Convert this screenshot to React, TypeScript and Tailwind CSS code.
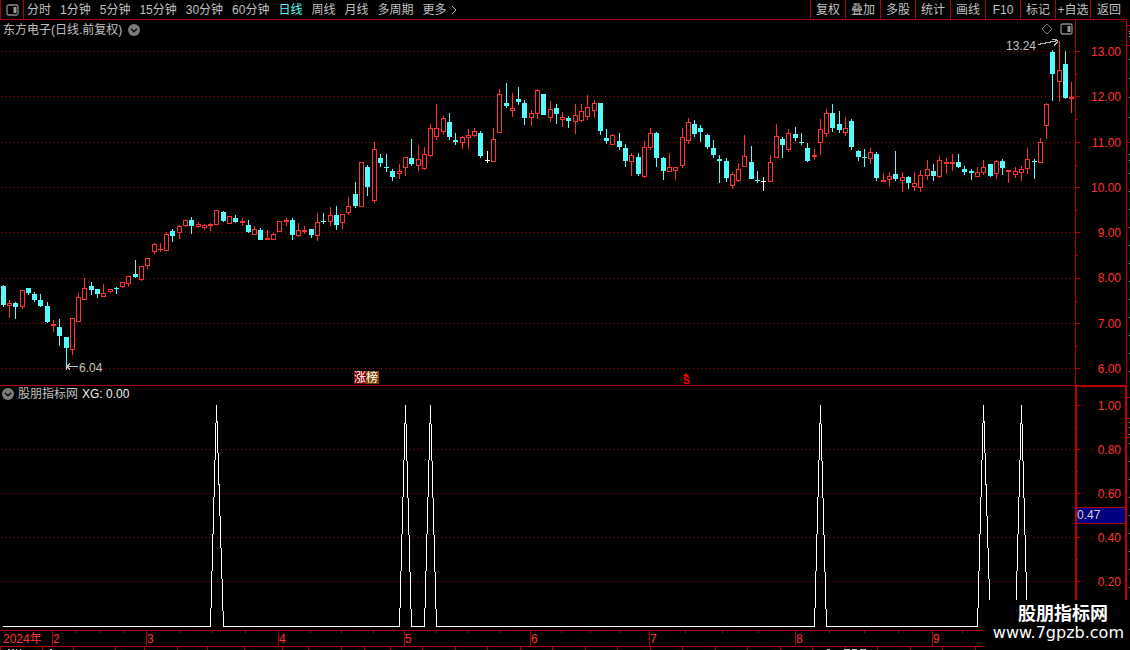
import { ReactNode } from "react";

type Kind = "up" | "down" | "flat";
// high, body top, body bottom, low
type Candle = [number, number, number, number, Kind];

const U = "up";
const D = "down";
const F = "flat";

const candles: Candle[] = [
  [285, 286, 305, 307, D], [300, 303, 306, 318, U], [302, 303, 307, 319, D], [290, 290, 307, 309, U],
  [288, 288, 293, 295, D], [292, 294, 300, 302, D], [294, 300, 306, 307, D], [302, 306, 322, 323, D],
  [320, 324, 326, 332, U], [319, 327, 336, 346, D], [337, 337, 348, 368, D], [318, 318, 350, 355, U],
  [293, 297, 322, 322, U], [278, 288, 300, 300, U], [282, 286, 290, 295, D], [289, 289, 294, 298, D],
  [284, 293, 297, 297, U], [289, 289, 292, 293, U], [287, 288, 289, 294, D], [282, 282, 287, 288, U],
  [276, 276, 284, 287, U], [260, 274, 277, 278, D], [266, 266, 280, 281, U], [258, 258, 266, 269, U],
  [243, 244, 252, 254, U], [243, 249, 250, 252, U], [232, 234, 251, 251, U], [229, 231, 236, 242, D],
  [225, 226, 233, 239, U], [220, 220, 226, 227, U], [217, 220, 226, 234, D], [222, 224, 227, 228, U],
  [224, 225, 228, 230, U], [223, 224, 226, 231, U], [210, 210, 225, 225, U], [211, 212, 221, 222, D],
  [216, 216, 224, 224, U], [215, 218, 222, 223, D], [218, 221, 223, 226, U], [220, 225, 232, 233, D],
  [226, 229, 235, 235, U], [228, 230, 240, 240, D], [230, 238, 240, 240, U], [233, 234, 240, 240, U],
  [221, 221, 232, 232, U], [218, 220, 222, 226, U], [218, 220, 235, 240, D], [223, 230, 236, 237, U],
  [226, 230, 232, 234, U], [229, 229, 235, 238, D], [213, 222, 236, 241, U], [213, 221, 222, 224, D],
  [207, 215, 222, 226, U], [206, 215, 225, 230, D], [214, 214, 223, 229, U], [197, 206, 213, 215, U],
  [182, 194, 206, 208, D], [162, 162, 207, 207, U], [165, 167, 187, 196, D], [142, 149, 201, 203, U],
  [154, 158, 163, 167, D], [154, 167, 168, 172, D], [169, 171, 177, 181, D], [164, 171, 174, 179, U],
  [157, 157, 168, 176, U], [139, 158, 164, 166, D], [145, 159, 166, 172, U], [147, 154, 169, 170, U],
  [124, 128, 156, 157, U], [104, 128, 137, 140, U], [116, 118, 132, 135, U], [113, 122, 137, 140, D],
  [133, 140, 142, 145, D], [136, 137, 143, 149, U], [129, 135, 138, 149, U], [128, 131, 136, 137, U],
  [131, 133, 156, 158, D], [151, 160, 161, 163, F], [128, 139, 162, 162, U], [89, 94, 133, 133, U],
  [83, 103, 106, 108, D], [93, 108, 111, 117, U], [87, 99, 102, 105, D], [100, 103, 118, 125, D],
  [110, 113, 118, 126, U], [89, 90, 114, 119, U], [94, 94, 115, 115, D], [101, 109, 118, 122, U],
  [104, 108, 114, 124, D], [112, 117, 120, 127, U], [116, 118, 121, 128, D], [104, 115, 122, 134, U],
  [104, 111, 121, 122, U], [95, 107, 117, 120, U], [100, 103, 111, 118, U], [103, 103, 131, 135, D],
  [129, 138, 141, 144, D], [134, 135, 145, 145, U], [133, 141, 147, 150, D], [144, 148, 161, 167, D],
  [153, 155, 162, 176, U], [153, 157, 174, 176, D], [141, 147, 177, 178, U], [128, 133, 148, 150, U],
  [132, 133, 158, 167, D], [157, 158, 171, 180, D], [153, 167, 172, 172, U], [167, 167, 171, 180, U],
  [128, 137, 166, 168, U], [118, 122, 141, 144, U], [120, 124, 134, 137, D], [125, 128, 132, 142, D],
  [134, 135, 147, 149, D], [140, 148, 155, 158, D], [155, 159, 161, 183, D], [158, 161, 178, 182, D],
  [172, 174, 186, 189, U], [163, 169, 181, 182, U], [135, 156, 167, 167, U], [146, 162, 179, 179, D],
  [171, 180, 181, 183, D], [177, 181, 182, 191, F], [155, 162, 182, 182, U], [124, 136, 158, 158, U],
  [137, 139, 145, 158, D], [129, 133, 150, 152, U], [127, 134, 138, 141, D], [133, 142, 143, 145, D],
  [143, 148, 161, 162, D], [149, 155, 157, 160, U], [119, 129, 143, 155, U], [109, 113, 134, 137, U],
  [104, 113, 128, 132, D], [111, 124, 130, 133, D], [117, 128, 133, 136, U], [119, 121, 147, 150, D],
  [150, 151, 157, 161, D], [149, 157, 158, 167, D], [148, 152, 159, 164, U], [152, 154, 178, 181, D],
  [173, 180, 182, 182, U], [172, 176, 180, 186, U], [151, 174, 179, 181, D], [172, 177, 181, 192, U],
  [176, 177, 183, 189, D], [172, 183, 187, 191, U], [170, 175, 188, 192, U], [160, 169, 176, 180, U],
  [164, 171, 176, 181, D], [156, 160, 177, 178, U], [158, 162, 164, 174, U], [154, 162, 164, 171, U],
  [154, 162, 167, 168, D], [166, 169, 172, 175, D], [169, 171, 173, 180, D], [167, 172, 177, 177, U],
  [160, 167, 173, 175, U], [164, 164, 176, 177, D], [160, 161, 174, 179, U], [159, 161, 168, 175, D],
  [170, 170, 172, 183, U], [167, 171, 175, 178, U], [166, 169, 173, 181, U], [148, 159, 169, 174, U],
  [159, 161, 162, 179, D], [138, 142, 163, 163, U], [103, 104, 126, 139, U], [50, 52, 74, 101, D],
  [41, 70, 82, 102, U], [51, 64, 98, 99, D], [82, 97, 99, 113, U],
];

const colors = { up: "#ff3232", down: "#54fcfc", flat: "#ffffff" };
const candleX = (i: number) => Math.floor(3.2 + i * 6.2856);

const periods = ["分时", "1分钟", "5分钟", "15分钟", "30分钟", "60分钟", "日线", "周线", "月线", "多周期"];
const tools = ["复权", "叠加", "多股", "统计", "画线", "F10", "标记", "+自选", "返回"];
const prices = ["13.00", "12.00", "11.00", "10.00", "9.00", "8.00", "7.00", "6.00"];
const priceLines = [51, 96, 142, 187, 232, 278, 323, 368];
const levels = ["1.00", "0.80", "0.60", "0.40", "0.20"];
const levelLines = [405, 449, 493, 537, 581];
const signals = [34, 64, 68, 130, 156, 162];

const months = [
  { label: "2024年", span: 52 },
  { label: "2", span: 94 },
  { label: "3", span: 132 },
  { label: "4", span: 126 },
  { label: "5", span: 126 },
  { label: "6", span: 119 },
  { label: "7", span: 146 },
  { label: "8", span: 137 },
  { label: "9", span: 195 },
];
const monthTotal = 1127;
const weekTicks = [76, 99, 123, 179, 212, 245, 310, 341, 373, 436, 467, 499, 561, 590, 620, 685, 722, 758, 829, 864, 898, 962];
const lowerTicks = [0, 42, 73, 115, 144, 177, 207, 244, 282, 308, 341, 364, 390, 422, 455, 487, 520, 552, 585, 617, 650, 682, 715, 747, 780, 812, 845, 877, 910, 942, 975];

function PanelIcon({ className }: { className: string }) {
  return (
    <svg viewBox="0 0 13 12" className={className}>
      <rect x="1" y="1" width="11" height="10" rx="1.5" fill="none" stroke="#8a8a8a" strokeWidth="1.3" />
      <rect x="7.5" y="3" width="3" height="6" fill="#9a9a9a" />
    </svg>
  );
}

function ToggleButton({ label }: { label: string }) {
  return (
    <button aria-label={label}>
      <svg viewBox="0 0 12 12" className="block size-3">
        <circle cx="6" cy="6" r="6" fill="#7c7c7c" />
        <path d="M3 4.8 6 7.8 9 4.8" fill="none" stroke="#0a0a0a" strokeWidth="1.5" />
      </svg>
    </button>
  );
}

function GridLine({ y }: { y: number }) {
  return <line x1="1" x2="1075" y1={y + 0.5} y2={y + 0.5} stroke="#b00000" strokeDasharray="1 3" />;
}

function Plot({ viewBox, children }: { viewBox: string; children: ReactNode }) {
  return (
    <svg viewBox={viewBox} preserveAspectRatio="none" shapeRendering="crispEdges" className="block size-full">
      {children}
    </svg>
  );
}

function Candlestick({ candle, x }: { candle: Candle; x: number }) {
  const [high, top, bottom, low, kind] = candle;
  const color = colors[kind];
  const hollow = kind === "up" && bottom - top > 2;
  return (
    <g>
      <rect x={x} y={high} width="1" height={low - high} fill={color} />
      {hollow ? (
        <rect x={x - 1.5} y={top + 0.5} width="4" height={bottom - top - 1} fill="#000" stroke={color} />
      ) : (
        <rect x={x - 2} y={top} width="5" height={bottom - top} fill={color} />
      )}
    </g>
  );
}

function Toolbar() {
  return (
    <header className="mr-[3px] flex h-5 items-stretch justify-between border-b border-[#b00000]">
      <div className="flex">
        <button aria-label="侧栏" className="flex w-6 items-center justify-center border-x border-[#b00000]">
          <PanelIcon className="h-3 w-[13px]" />
        </button>
        <nav className="flex items-center gap-[9px] pl-[3px]">
          {periods.map((name) => (
            <button key={name} className={name === "日线" ? "text-[#54fcfc]" : ""}>
              {name}
            </button>
          ))}
          <button className="flex items-center gap-1">
            更多
            <svg viewBox="0 0 6 10" className="h-2.5 w-1.5">
              <path d="M1 1 5 5 1 9" fill="none" stroke="#c0c0c0" />
            </svg>
          </button>
        </nav>
      </div>
      <div className="flex">
        {tools.map((name) => (
          <button key={name} className="w-[35px] border-l border-[#b00000] text-center whitespace-nowrap last:w-[37px]">
            {name}
          </button>
        ))}
      </div>
    </header>
  );
}

function PriceChart() {
  return (
    <section className="flex h-[366px] border-b border-[#b00000]">
      <div className="relative min-w-0 flex-1">
        <Plot viewBox="0 20 1075 365">
          {priceLines.map((y) => (
            <GridLine key={y} y={y} />
          ))}
          {candles.map((c, i) => (
            <Candlestick key={i} candle={c} x={candleX(i)} />
          ))}
          <path d="M66 366.5H78M66.5 366V370M67 366.5 70 363.5M67 366.5 70 369.5" fill="none" stroke="#c0c0c0" />
          <path d="M1038 44.5 1058 40.5M1052 39.5H1057M1058 41.5 1054 45.5" fill="none" stroke="#c0c0c0" />
        </Plot>
        <div className="absolute top-0 left-0 flex h-5 items-center gap-1.5 pl-[3px]">
          <h1>东方电子(日线.前复权)</h1>
          <ToggleButton label="选择股票" />
        </div>
        <div className="absolute top-[3px] right-[2px] flex items-center gap-[7px]">
          <svg viewBox="0 0 12 12" className="size-3">
            <path d="M6 1 11 6 6 11 1 6Z" fill="none" stroke="#777" />
          </svg>
          <PanelIcon className="h-3 w-[13px]" />
        </div>
        <span className="absolute top-[18px] right-[39px] leading-4">13.24</span>
        <span className="absolute top-[340px] left-[79px] leading-4">6.04</span>
        <div className="absolute bottom-px left-[354px] flex text-white">
          <span className="h-[13px] bg-[#800000] leading-[14px]">涨</span>
          <span className="h-[13px] w-[13px] bg-[#804000] leading-[14px]">榜</span>
        </div>
        <div className="absolute bottom-0 left-[683px] flex flex-col items-center font-bold text-[#ff0000]">
          <svg viewBox="0 0 6 3" className="h-[3px] w-1.5">
            <path d="M3 0 6 3H0Z" fill="#ff0000" />
          </svg>
          <span className="text-[10px] leading-[9px]">S</span>
        </div>
      </div>
      <div className="relative flex w-[52px] flex-col justify-between border-x border-[#b00000] pt-6 pr-[5px] pb-2 text-right text-[#ff3232]">
        {prices.map((p) => (
          <span key={p} className="leading-4">{p}</span>
        ))}
        <svg viewBox="1076 20 5 365" className="absolute top-0 left-0 h-[365px] w-[5px]" shapeRendering="crispEdges">
          {priceLines.map((y) => (
            <path key={y} d={`M1076 ${y + 0.5}h4M1076 ${y + 23.5}h2`} stroke="#b00000" />
          ))}
        </svg>
      </div>
    </section>
  );
}

function IndicatorChart() {
  const points = signals
    .map((i) => `${candleX(i - 1) + 0.5},626.5 ${candleX(i) + 0.5},405 ${candleX(i + 1) + 0.5},626.5`)
    .join(" ");

  return (
    <section className="flex h-[244px]">
      <div className="relative min-w-0 flex-1">
        <Plot viewBox="0 386 1075 244">
          {levelLines.slice(1).map((y) => (
            <GridLine key={y} y={y} />
          ))}
          <polyline points={`3,626.5 ${points} 1071,626.5`} fill="none" stroke="#ffffff" />
        </Plot>
        <div className="absolute top-0 left-0 flex h-4 items-center gap-1 pl-0.5">
          <ToggleButton label="选择指标" />
          <h2>股朋指标网</h2>
          <span className="text-[#f0f0f0]">XG: 0.00</span>
        </div>
      </div>
      <div className="relative flex w-[52px] flex-col justify-between border-x-2 border-t border-[#c00000] pt-[11px] pr-1 pb-10 text-right text-[#ff3232]">
        {levels.map((v) => (
          <span key={v} className="leading-4">{v}</span>
        ))}
        <svg viewBox="1077 387 5 243" className="absolute top-0 left-0 h-[243px] w-[5px]" shapeRendering="crispEdges">
          {levelLines.map((y) => (
            <path key={y} d={`M1077 ${y + 0.5}h4M1077 ${y + 22.5}h1`} stroke="#b00000" />
          ))}
        </svg>
        <span className="absolute inset-x-0 top-[120px] h-[17px] border-y border-[#b00000] bg-[#000080] text-left leading-[15px] text-[#d0d0d0]">
          0.47
        </span>
      </div>
    </section>
  );
}

function TimeAxis() {
  return (
    <footer className="relative">
      <div className="flex h-[17px] border-y border-[#b00000] text-[#ff3232]">
        {months.map(({ label, span }, i) => (
          <span
            key={label}
            className={i === 0 ? "pl-[3px] leading-4" : "border-l border-[#b00000] leading-4"}
            style={{ width: `${(span / monthTotal) * 100}%` }}
          >
            {label}
          </span>
        ))}
      </div>
      <svg viewBox="0 630 1127 20" preserveAspectRatio="none" className="absolute top-0 left-0 h-5 w-full" shapeRendering="crispEdges">
        {weekTicks.map((x) => (
          <rect key={x} x={x} y="631" width="1" height="2" fill="#b00000" />
        ))}
        {lowerTicks.map((x) => (
          <rect key={x} x={x} y="647" width="1" height="3" fill="#b00000" />
        ))}
        <path d="M8 649.5h2m2 0h2m2 0h1m3 0h1M50 649.5h2M827 649.5h3m14 0h6m2 0h5m3 0h6" stroke="#c0c0c0" />
      </svg>
    </footer>
  );
}

function EdgeStrip() {
  return (
    <svg viewBox="1127 20 3 630" className="h-[630px] w-[3px] shrink-0" shapeRendering="crispEdges">
      {[25, 45, 142, 397, 418, 437].map((y) => (
        <rect key={y} x="1127" y={y} width="3" height="1" fill="#b00000" />
      ))}
      {[31, 33, 36, 59, 78, 97, 117, 154, 160, 173, 191, 209, 227, 245, 263, 281, 299, 317, 335, 353, 371, 422, 427, 434, 443, 461, 479, 497, 515, 533, 551, 569, 587].map((y) => (
        <rect key={y} x="1129" y={y} width="1" height="1" fill="#c0c0c0" />
      ))}
    </svg>
  );
}

export default function App() {
  return (
    <div className="relative min-h-screen overflow-hidden bg-black font-['Liberation_Sans','Noto_Sans_CJK_SC',sans-serif] text-[12px] leading-4 text-[#c0c0c0]">
      <Toolbar />
      <div className="flex">
        <main className="min-w-0 flex-1">
          <PriceChart />
          <IndicatorChart />
          <TimeAxis />
        </main>
        <EdgeStrip />
      </div>
      <div className="absolute right-0 bottom-0 flex h-[50px] w-[146px] flex-col items-end bg-black pt-1 pr-[6px] text-white">
        <strong className="pr-4 text-[18px] leading-5">股朋指标网</strong>
        <a href="#" className="font-['DejaVu_Sans',sans-serif] text-[16px] leading-[18px]">www.7gpzb.com</a>
      </div>
    </div>
  );
}
